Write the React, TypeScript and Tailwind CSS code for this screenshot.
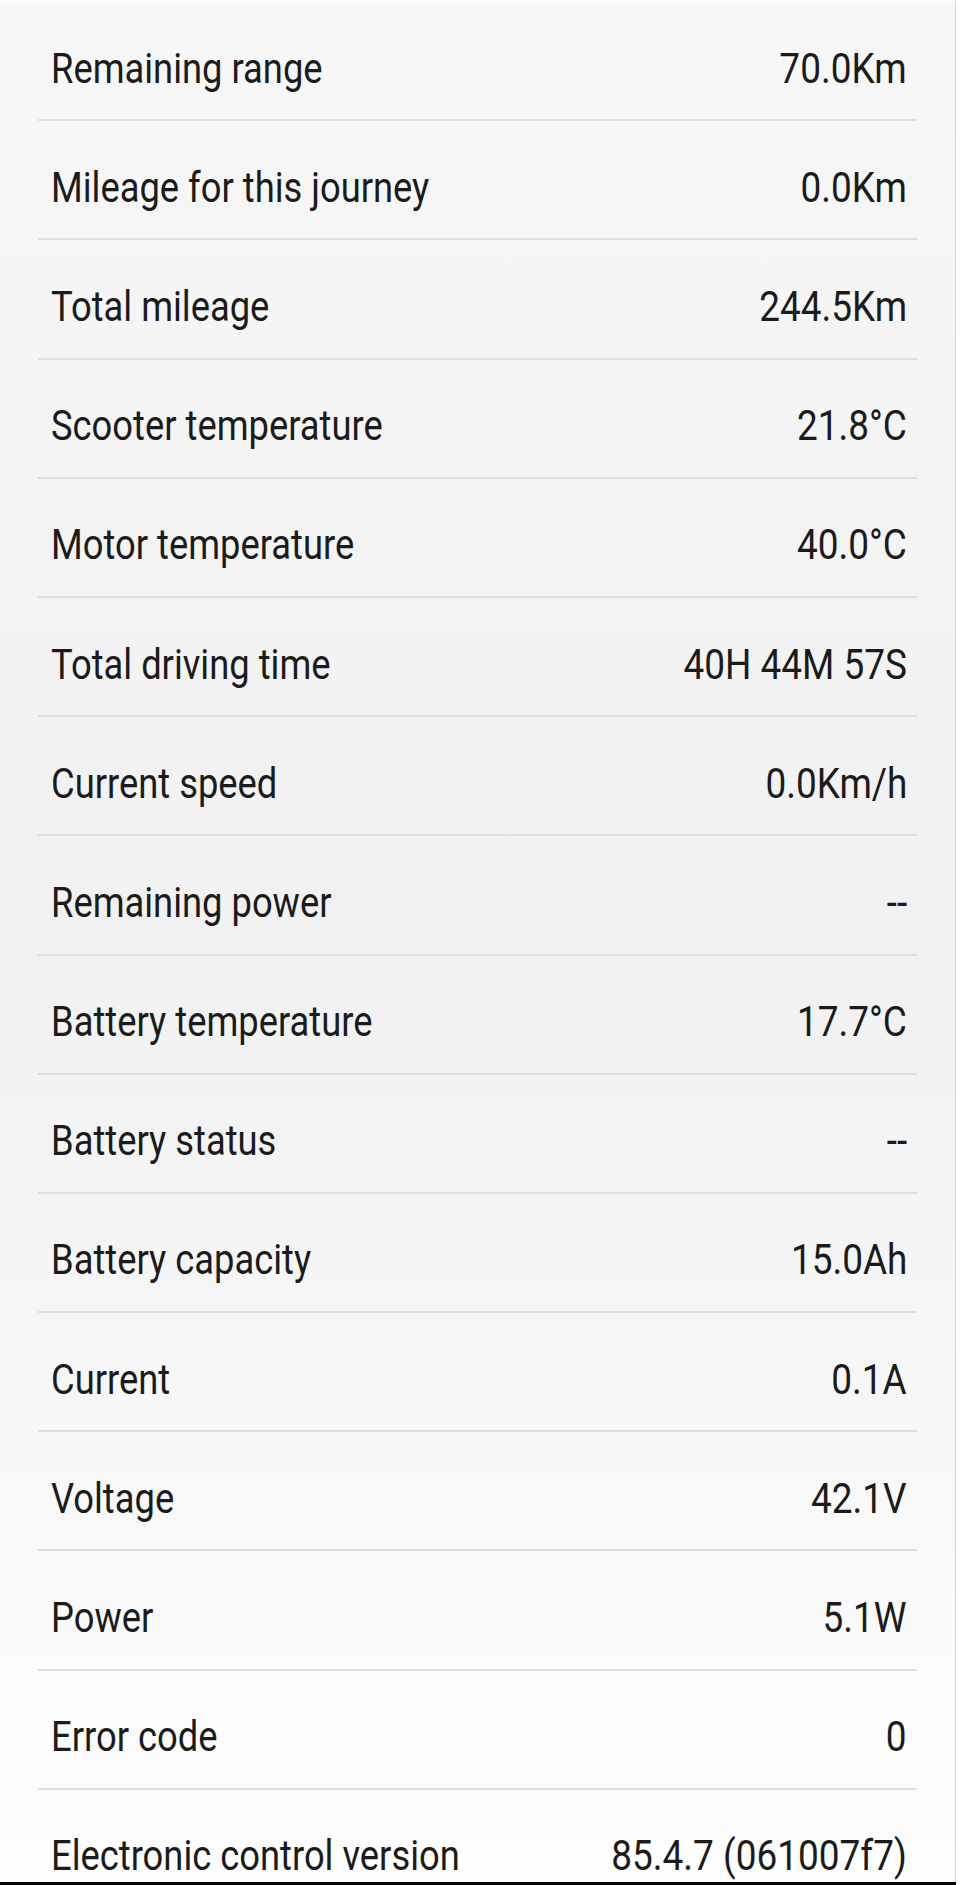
const rows: [string, string][] = [
  ["Remaining range", "70.0Km"],
  ["Mileage for this journey", "0.0Km"],
  ["Total mileage", "244.5Km"],
  ["Scooter temperature", "21.8°C"],
  ["Motor temperature", "40.0°C"],
  ["Total driving time", "40H 44M 57S"],
  ["Current speed", "0.0Km/h"],
  ["Remaining power", "--"],
  ["Battery temperature", "17.7°C"],
  ["Battery status", "--"],
  ["Battery capacity", "15.0Ah"],
  ["Current", "0.1A"],
  ["Voltage", "42.1V"],
  ["Power", "5.1W"],
  ["Error code", "0"],
  ["Electronic control version", "85.4.7 (061007f7)"],
]

function InfoRow({ label, value }: { label: string; value: string }) {
  return (
    <div className="mx-[38px] h-[119.2px] shrink-0 flex items-center justify-between pt-4 pl-[13px] pr-[10px] border-b-2 border-[#dedede] text-[42px] leading-none text-[#1b1b1b] whitespace-nowrap">
      <span className="origin-left scale-x-[0.865]">{label}</span>
      <span className="origin-right scale-x-[0.88]">{value}</span>
    </div>
  )
}

export default function App() {
  return (
    <main className="w-[960px] h-[1885px] flex flex-col overflow-hidden bg-white font-['Roboto',sans-serif]">
      {/* stats list */}
      <div className="w-[956px] h-[1882px] flex flex-col overflow-hidden border-r border-[#d6d6d6] border-t-2 border-t-[#fbfbfb] bg-gradient-to-b from-[#f7f7f7] via-[#f1f1f1] to-[#fdfdfd]">
        {rows.map(([label, value]) => (
          <InfoRow key={label} label={label} value={value} />
        ))}
      </div>
      <div className="w-[956px] h-[3px] bg-black" />
    </main>
  )
}
